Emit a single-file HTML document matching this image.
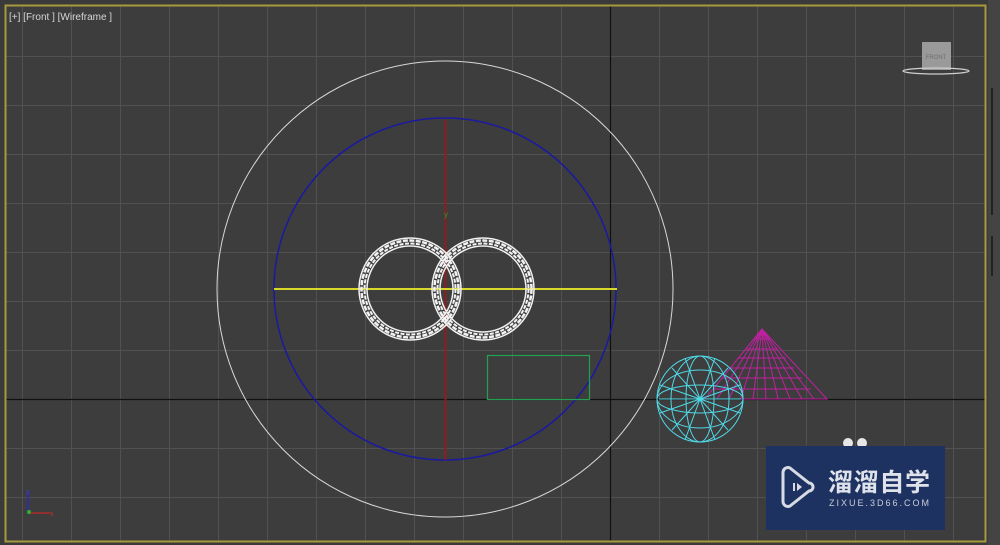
<!DOCTYPE html>
<html><head><meta charset="utf-8"><style>
html,body{margin:0;padding:0;background:#3c3c3c;width:1000px;height:545px;overflow:hidden}
svg{display:block}
</style></head><body>
<svg width="1000" height="545" viewBox="0 0 1000 545" xmlns="http://www.w3.org/2000/svg" font-family="Liberation Sans, sans-serif">
<rect width="1000" height="545" fill="#3a3a3a"/>
<rect x="5" y="5" width="981" height="537" fill="#3d3d3d"/>
<g stroke="#515151" stroke-width="1">
<path d="M22.5 5V542M71.5 5V542M120.5 5V542M169.5 5V542M218.5 5V542M267.5 5V542M316.5 5V542M365.5 5V542M414.5 5V542M463.5 5V542M512.5 5V542M561.5 5V542M659.5 5V542M708.5 5V542M757.5 5V542M806.5 5V542M855.5 5V542M904.5 5V542M953.5 5V542"/>
<path d="M5 56.5H986M5 105.5H986M5 154.5H986M5 203.5H986M5 252.5H986M5 301.5H986M5 350.5H986M5 448.5H986M5 497.5H986"/>
</g>
<path d="M610.5 5V542M5 399.5H986" stroke="#111" stroke-width="1.2"/>
<rect x="5.5" y="5.5" width="980" height="536" fill="none" stroke="#a79a3c" stroke-width="2"/>
<rect x="988" y="0" width="12" height="545" fill="#444"/>
<path d="M992 88V215M992 236V276" stroke="#222" stroke-width="2"/>
<text x="9" y="20" fill="#d6d6d6" font-size="10">[+] [Front ] [Wireframe ]</text>
<rect x="922" y="42" width="29" height="28" fill="#9a9a9a"/>
<text x="936" y="59" fill="#6e6e6e" font-size="6" text-anchor="middle">FRONT</text>
<ellipse cx="936" cy="71" rx="33" ry="3" fill="none" stroke="#cfcfcf" stroke-width="1.2"/>
<circle cx="445" cy="289" r="228" fill="none" stroke="#d8d8d8" stroke-width="1"/>
<circle cx="445" cy="289" r="171" fill="none" stroke="#1a1aa0" stroke-width="1.5"/>
<line x1="445.5" y1="120" x2="445.5" y2="460" stroke="#8a1e1e" stroke-width="2"/>
<line x1="274" y1="289" x2="617" y2="289" stroke="#d8d82a" stroke-width="2"/>
<text x="444" y="217" fill="#2c9a2c" font-size="8">y</text>
<g fill="none" stroke="#f2f2f2">
<circle cx="410" cy="289" r="51" stroke-width="1.5"/>
<circle cx="410" cy="289" r="48.5" stroke-width="2.5" stroke-dasharray="5 1.5"/>
<circle cx="410" cy="289" r="45.5" stroke-width="2" stroke-dasharray="4 1.5"/>
<circle cx="410" cy="289" r="43" stroke-width="1.5"/>
<circle cx="483" cy="289" r="51" stroke-width="1.5"/>
<circle cx="483" cy="289" r="48.5" stroke-width="2.5" stroke-dasharray="5 1.5"/>
<circle cx="483" cy="289" r="45.5" stroke-width="2" stroke-dasharray="4 1.5"/>
<circle cx="483" cy="289" r="43" stroke-width="1.5"/>
</g>
<rect x="487.5" y="355.5" width="102" height="44" fill="none" stroke="#23a050" stroke-width="1.2"/>
<g stroke="#c020a0" stroke-width="1" fill="none">
<path d="M762 329L705 399H827Z"/>
<path d="M762 329L717 399M762 329L729 399M762 329L741 399M762 329L753 399M762 329L766 399M762 329L778 399M762 329L790 399M762 329L802 399M762 329L814 399"/>
<path d="M754 339H770M746 349H778M738 358H786M730 368H794M722 378H802M714 389H811"/>
</g>
<g stroke="#4fd8e6" stroke-width="1" fill="none">
<circle cx="700" cy="399" r="43"/>
<ellipse cx="700" cy="399" rx="14" ry="43"/>
<ellipse cx="700" cy="399" rx="29" ry="43"/>
<ellipse cx="700" cy="399" rx="43" ry="14"/>
<ellipse cx="700" cy="399" rx="43" ry="29"/>
<path d="M660 385L740 413M660 413L740 385M672 368L728 430M672 430L728 368M685 358L715 440M685 440L715 358M659 399H741"/>
</g>
<path d="M28 491V513" stroke="#2a2ac0" stroke-width="1.5" fill="none"/>
<path d="M28 513H50" stroke="#b02a2a" stroke-width="1.5"/>
<text x="26" y="494" fill="#4040d0" font-size="7">z</text>
<text x="50" y="516" fill="#c03030" font-size="7">x</text>
<circle cx="29" cy="512" r="2" fill="#30b030"/>
<ellipse cx="848" cy="443" rx="5" ry="5" fill="#e6e6e6"/>
<ellipse cx="862" cy="443" rx="5" ry="5" fill="#e6e6e6"/>
<rect x="766" y="446" width="179" height="84" fill="#1e3262"/>
<path d="M783 472A5 5 0 0 1 790 468L809 483A4 4 0 0 1 809 491L790 506A5 5 0 0 1 783 502Z" fill="none" stroke="#d8dbe4" stroke-width="3"/>
<rect x="793" y="483" width="2" height="8" fill="#d8dbe4"/><path d="M797 483L802 487L797 491Z" fill="#d8dbe4"/>
<text x="828" y="491" fill="#dfe2ea" font-size="25" font-weight="bold" font-family="Liberation Sans, Noto Sans CJK SC, sans-serif" textLength="102">溜溜自学</text>
<text x="829" y="506" fill="#c8ccd8" font-size="9" textLength="100">ZIXUE.3D66.COM</text>
</svg>
</body></html>
